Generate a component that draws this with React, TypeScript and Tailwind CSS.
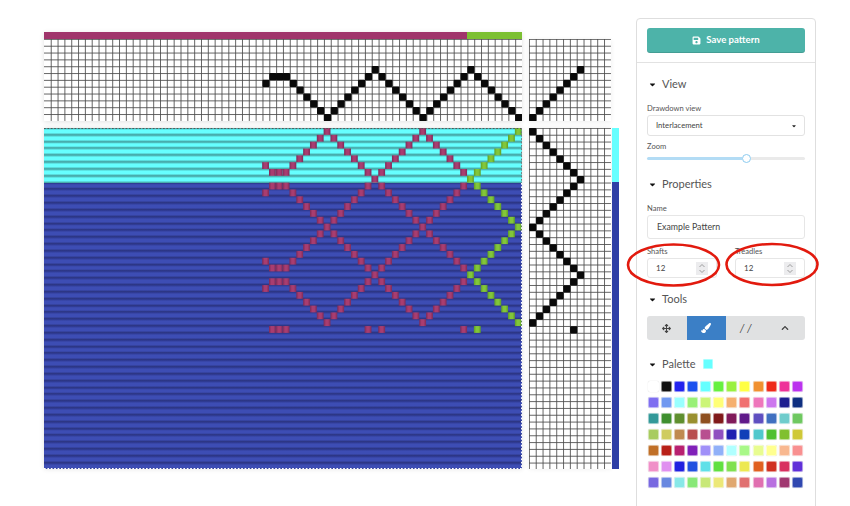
import { FaArrowsAlt, FaCaretDown, FaChevronUp, FaPaintBrush, FaSave } from "react-icons/fa";

const CELL = 6.83;
const COLS = 70;
const ROWS = 50;

// threading: shaft row (from the top) for each warp end, -1 = empty
const threading: number[] = Array(COLS).fill(-1);
threading[32] = 6;
threading[33] = 5;
threading[34] = 5;
threading[35] = 5;
for (let c = 36; c < COLS; c++) {
  const p = (c - 41 + 14) % 14;
  threading[c] = p <= 7 ? 11 - p : 4 + (p - 7);
}

// treadling: treadle for each pick
const treadling: number[] = Array(ROWS).fill(-1);
[0, 1, 2, 3, 4, 5, 6, 7, 6, 5, 4, 3, 2, 1, 0, 1, 2, 3, 4, 5, 6, 7, 6, 5, 4, 3, 2, 1, 0, 6].forEach((t, i) => {
  treadling[i] = t;
});

const palette = [
  ["#ffffff", "#111111", "#2222ee", "#1a50ee", "#66ffff", "#66f040", "#99f040", "#ffff44", "#f09030", "#ee2a1a", "#ee3399", "#bb33ee"],
  ["#7f6ff0", "#7098f0", "#99ffff", "#99f077", "#ccf577", "#ffff77", "#f5b070", "#f07070", "#ee77bb", "#cc77ee", "#1f1f90", "#0f2f80"],
  ["#339999", "#3f8f2f", "#5f8f2f", "#99902f", "#8f5020", "#801a1a", "#801a5a", "#601a8a", "#5f4fc0", "#4070c0", "#6fcccc", "#6fc860"],
  ["#a8cc60", "#cfcc60", "#c08a50", "#b84f4f", "#b84f90", "#9050c0", "#2020b0", "#1040b8", "#50c8cc", "#50c030", "#80c030", "#cfc838"],
  ["#c07028", "#b82018", "#b82070", "#8020b8", "#a090f8", "#90b0f8", "#b0ffff", "#a8f888", "#e8fc90", "#ffff90", "#f8b890", "#f89090"],
  ["#f090c8", "#e090f0", "#2020e0", "#2050e0", "#60e0e8", "#60e040", "#80e050", "#ece850", "#e06020", "#d03020", "#d83060", "#6030d8"],
  ["#7868e0", "#6888e0", "#88e8e8", "#88e878", "#c8e878", "#ece878", "#e0a870", "#e07070", "#e070b0", "#b870e0", "#a03870", "#3048b0"],
];

const Grid = ({ cols, rows, leftLine }: { cols: number; rows: number; leftLine?: boolean }) => {
  const w = cols * CELL;
  const h = rows * CELL;
  return (
    <g stroke="#4a4a4a" strokeWidth="0.85">
      {Array.from({ length: cols + 1 }).map((_, i) =>
        (leftLine ? i < cols : i > 0) ? <line key={"v" + i} x1={i * CELL + 0.4} x2={i * CELL + 0.4} y1={0} y2={h} /> : null
      )}
      {Array.from({ length: rows }).map((_, i) => (
        <line key={"h" + i} x1={0} x2={w} y1={i * CELL + 0.4} y2={i * CELL + 0.4} />
      ))}
    </g>
  );
};

const Threading = () => (
  <svg width="478" height="82" className="block">
    <Grid cols={70} rows={12} />
    {threading.map((r, c) =>
      r < 0 ? null : <rect key={c} x={c * CELL - 0.2} y={r * CELL - 0.2} width={CELL + 0.4} height={CELL + 0.4} rx="1" fill="#0a0a0a" />
    )}
  </svg>
);

const TieUp = () => (
  <svg width="82" height="82" className="block">
    <Grid cols={12} rows={12} leftLine />
    {[0, 1, 2, 3, 4, 5, 6, 7].map((t) => (
      <rect key={t} x={t * CELL + 0.1} y={(11 - t) * CELL - 0.2} width={CELL + 0.4} height={CELL + 0.4} rx="1" fill="#0a0a0a" />
    ))}
  </svg>
);

const Treadling = () => (
  <svg width="82" height="341" className="block">
    <Grid cols={12} rows={50} leftLine />
    {treadling.map((t, r) =>
      t < 0 ? null : <rect key={r} x={t * CELL + 0.1} y={r * CELL + 0.1} width={CELL + 0.4} height={CELL + 0.4} rx="1" fill="#0a0a0a" />
    )}
  </svg>
);

const Drawdown = () => (
  <svg width="478" height="341" className="block">
    <defs>
      <linearGradient id="cyan" x1="0" y1="0" x2="0" y2="1">
        <stop offset="0" stopColor="#43a0a0" />
        <stop offset="0.3" stopColor="#66ffff" />
        <stop offset="0.68" stopColor="#66ffff" />
        <stop offset="1" stopColor="#3f9696" />
      </linearGradient>
      <linearGradient id="blue" x1="0" y1="0" x2="0" y2="1">
        <stop offset="0" stopColor="#2b3588" />
        <stop offset="0.3" stopColor="#3d4db4" />
        <stop offset="0.68" stopColor="#3d4db4" />
        <stop offset="1" stopColor="#283078" />
      </linearGradient>
      <linearGradient id="plum" x1="0" y1="0" x2="1" y2="0">
        <stop offset="0" stopColor="#7c2a58" />
        <stop offset="0.35" stopColor="#a83d70" />
        <stop offset="0.65" stopColor="#a83d70" />
        <stop offset="1" stopColor="#7c2a58" />
      </linearGradient>
      <linearGradient id="lime" x1="0" y1="0" x2="1" y2="0">
        <stop offset="0" stopColor="#5f9f25" />
        <stop offset="0.35" stopColor="#82c63a" />
        <stop offset="0.65" stopColor="#82c63a" />
        <stop offset="1" stopColor="#5f9f25" />
      </linearGradient>
    </defs>
    {Array.from({ length: ROWS }).map((_, r) => {
      // snap each pick to whole pixels so the stripes stay even
      const top = Math.round(r * CELL);
      const bottom = Math.round((r + 1) * CELL);
      return <rect key={r} x="0" y={top} width="478" height={bottom - top} fill={r < 8 ? "url(#cyan)" : "url(#blue)"} />;
    })}
    {treadling.map((t, r) =>
      t < 0
        ? null
        : threading.map((s, c) =>
            s === 11 - t ? (
              <rect key={r + "-" + c} x={c * CELL - 0.4} y={r * CELL} width={CELL} height={CELL} fill={c < 62 ? "url(#plum)" : "url(#lime)"} />
            ) : null
          )
    )}
    <line x1="0" x2="478" y1="0.5" y2="0.5" stroke="#555" strokeDasharray="1.7 1.7" />
    <line x1="477.5" x2="477.5" y1="55" y2="341" stroke="#fff" strokeDasharray="1.7 1.7" />
    <line x1="477.5" x2="477.5" y1="0" y2="55" stroke="#777" strokeDasharray="1.7 1.7" />
    <line x1="0" x2="478" y1="340.5" y2="340.5" stroke="#fff" strokeDasharray="1.7 1.7" />
  </svg>
);

const Section = ({ title }: { title: string }) => (
  <div className="flex h-[14px] items-center text-[11px] leading-[14px] text-[#555]">
    <FaCaretDown className="ml-[1px] mr-[5px] text-[#111]" size={9} />
    <span>{title}</span>
  </div>
);

const Label = ({ children }: { children: string }) => (
  <div className="h-[11px] text-[7.6px] leading-[11px] text-[#555]">{children}</div>
);

const NumberField = ({ value }: { value: string }) => (
  <div className="flex h-[20px] w-[70px] items-center justify-between rounded-[3px] border border-[#e6e6e6] pl-[8px] pr-[8px] text-[8px] text-[#444]">
    {value}
    <svg width="12" height="13" viewBox="0 0 12 13" className="block bg-[#ececee]">
      <path d="M3.5 5 6 2.5 8.5 5M3.5 8 6 10.5 8.5 8" fill="none" stroke="#888" strokeWidth="0.8" />
    </svg>
  </div>
);

const ToolButton = ({ active, children }: { active?: boolean; children: React.ReactNode }) => (
  <div className={active ? "flex flex-1 items-center justify-center bg-[#3b7fc6] text-white" : "flex flex-1 items-center justify-center text-[#444]"}>
    {children}
  </div>
);

const App = () => {
  return (
    <div className="relative flex h-[506px] w-[850px] overflow-hidden bg-white font-[Lato,sans-serif]">
      <div className="ml-[44px] mt-[32px] w-[592px]">
        <div className="flex gap-[7px]">
          <div className="w-[478px] shadow-[0_1px_5px_rgba(0,0,0,0.12)]">
            <div className="flex h-[7px]">
              <div className="w-[423px] bg-[#a0356b]" />
              <div className="flex-1 bg-[#7cc032]" />
            </div>
            <Threading />
          </div>
          <div className="mt-[7px] shadow-[0_1px_5px_rgba(0,0,0,0.07)]">
            <TieUp />
          </div>
        </div>
        <div className="mt-[7px] flex items-start gap-[7px]">
          <div className="shadow-[0_0_5px_rgba(0,0,0,0.12)]">
            <Drawdown />
          </div>
          <div className="shadow-[0_0_5px_rgba(0,0,0,0.07)]">
            <Treadling />
          </div>
          <div className="-ml-[6px] w-[7px]">
            <div className="h-[54px] bg-[#66ffff]" />
            <div className="h-[287px] bg-[#2e3fa6]" />
          </div>
        </div>
      </div>

      <aside className="mt-[18px] h-[600px] w-[180px] shrink-0 rounded-[4px] border border-[#dedede]">
        <div className="border-b border-[#e2e2e2] px-[10px] pb-[9px] pt-[9px]">
          <div className="flex h-[25px] items-center justify-center gap-[5px] rounded-[3px] bg-[#4db3a9] text-[9.6px] font-bold text-white shadow-[inset_0_-1px_0_rgba(0,0,0,0.12)]">
            <FaSave size={9} />
            Save pattern
          </div>
        </div>

        <div className="px-[10px]">
          <div className="pt-[14px]">
            <Section title="View" />
          </div>
          <div className="mt-[12px]">
            <Label>Drawdown view</Label>
          </div>
          <div className="mt-[1px] flex h-[21px] items-center justify-between rounded-[3px] border border-[#e2e2e2] pl-[8px] pr-[7px] text-[7.7px] text-[#444]">
            Interlacement
            <FaCaretDown className="text-[#222]" size={6} />
          </div>
          <div className="mt-[5px]">
            <Label>Zoom</Label>
          </div>
          <div className="mt-[1px] flex h-[11px] items-center">
            <div className="h-[3px] w-[95px] rounded-l-full bg-[#b3dcf5]" />
            <div className="h-[9px] w-[9px] shrink-0 rounded-full border border-[#8ccbf0] bg-white" />
            <div className="h-[3px] flex-1 rounded-r-full bg-[#eaeaea]" />
          </div>

          <div className="mt-[13px]">
            <Section title="Properties" />
          </div>
          <div className="mt-[12px]">
            <Label>Name</Label>
          </div>
          <div className="mt-[1px] flex h-[24px] items-center rounded-[3px] border border-[#e6e6e6] pl-[9px] text-[8.8px] text-[#444]">
            Example Pattern
          </div>
          <div className="mt-[7px] flex justify-between">
            <div>
              <Label>Shafts</Label>
              <div className="mt-[1px]">
                <NumberField value="12" />
              </div>
            </div>
            <div>
              <Label>Treadles</Label>
              <div className="mt-[1px]">
                <NumberField value="12" />
              </div>
            </div>
          </div>

          <div className="mt-[14px]">
            <Section title="Tools" />
          </div>
          <div className="mt-[10px] flex h-[24px] overflow-hidden rounded-[3px] bg-[#e0e1e2] text-[11px]">
            <ToolButton>
              <FaArrowsAlt size={9} />
            </ToolButton>
            <ToolButton active>
              <FaPaintBrush size={10} />
            </ToolButton>
            <ToolButton>
              <span className="italic">/ /</span>
            </ToolButton>
            <ToolButton>
              <FaChevronUp size={8} />
            </ToolButton>
          </div>

          <div className="mt-[17px] flex h-[14px] items-center">
            <Section title="Palette" />
            <div className="ml-[7px] h-[10px] w-[10px] rounded-[1px] border border-[#a8ffff] bg-[#66ffff]" />
          </div>
          <div className="ml-[1px] mt-[10px] grid grid-cols-[repeat(12,13.07px)] gap-y-[5.07px]">
            {palette.flat().map((c, i) => (
              <div key={i} className="h-[11px] w-[11px] rounded-[2px] border border-white/50 shadow-[0_0_1px_rgba(0,0,0,0.2)]" style={{ backgroundColor: c }} />
            ))}
          </div>
        </div>
      </aside>

      <svg width="205" height="56" viewBox="0 0 205 56" fill="none" className="absolute left-[620px] top-[237px]">
        <ellipse cx="53.5" cy="28" rx="45.5" ry="20.5" stroke="#e21a0e" strokeWidth="2.6" />
        <ellipse cx="152" cy="27.5" rx="45.5" ry="20.5" stroke="#e21a0e" strokeWidth="2.6" />
      </svg>
    </div>
  );
};

export default App;
